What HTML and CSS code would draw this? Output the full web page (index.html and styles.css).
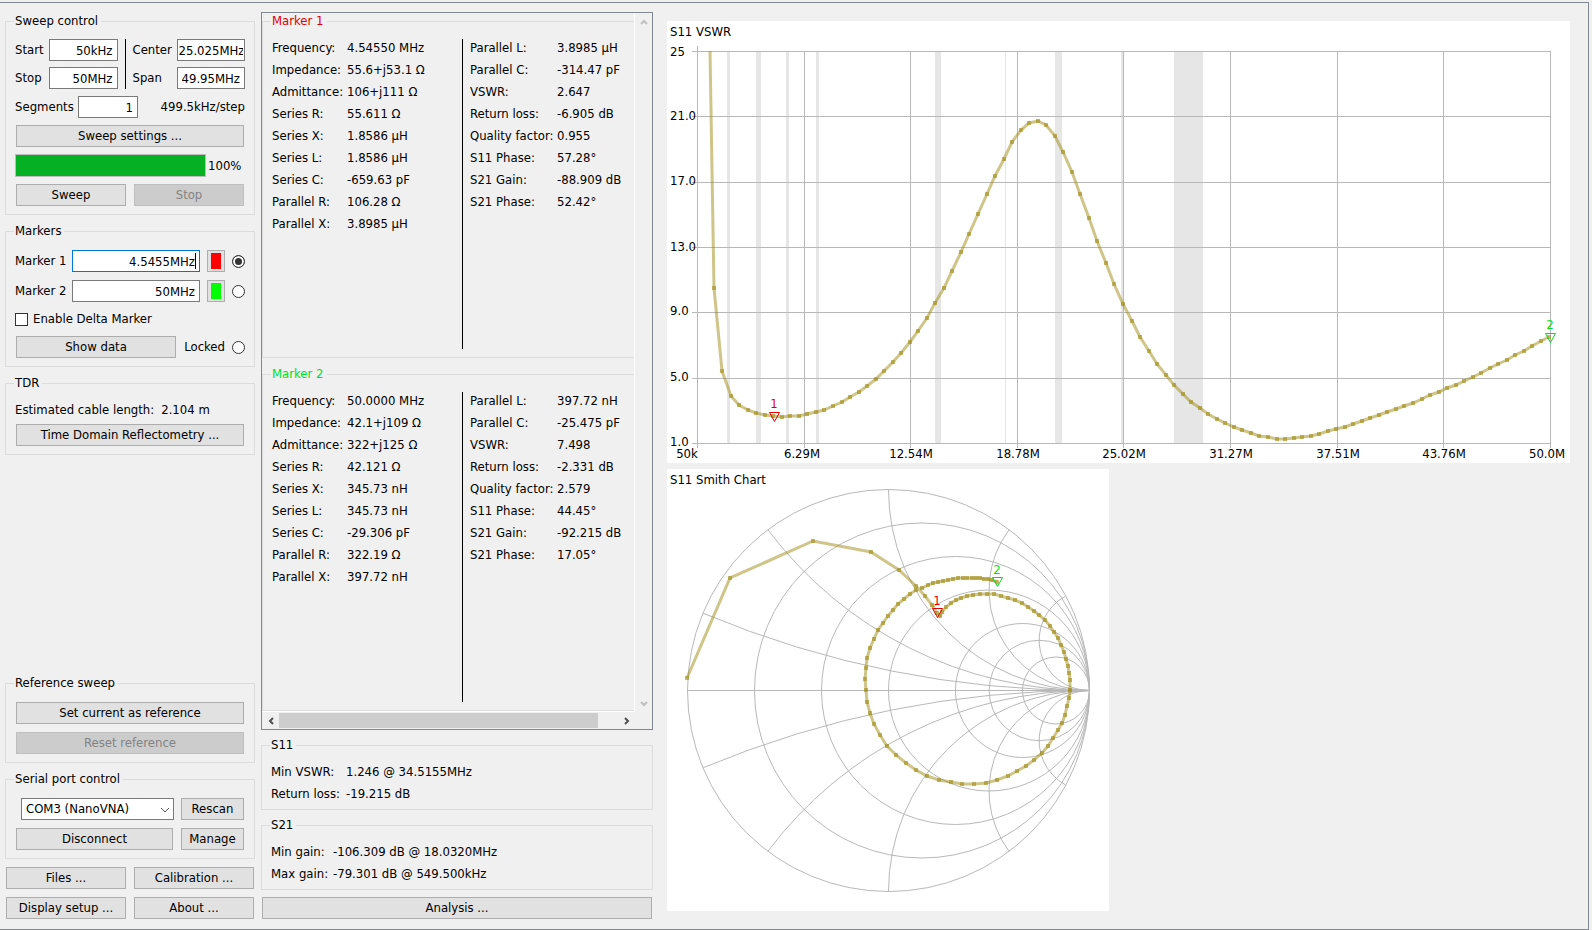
FILE: index.html
```html
<!DOCTYPE html>
<html lang="en">
<head>
    <meta charset="UTF-8">
    <meta name="viewport" content="width=device-width, initial-scale=1.0">
    <title>NanoVNA Saver</title>
    <link rel="stylesheet" href="styles.css">
</head>
<body>
    <main class="window">

        <!-- Controls -->
        <div class="controls">
            <fieldset class="group sweep">
                <legend>Sweep control</legend>
                <div class="range">
                    <label for="start">Start</label>
                    <input class="field" type="text" id="start" value="50kHz">
                    <span class="divider"></span>
                    <label for="center">Center</label>
                    <input class="field tight" type="text" id="center" value="25.025MHz">
                    <label for="stop">Stop</label>
                    <input class="field" type="text" id="stop" value="50MHz">
                    <label for="span">Span</label>
                    <input class="field" type="text" id="span" value="49.95MHz">
                </div>
                <div class="row">
                    <label class="segments-label" for="segments">Segments</label>
                    <input class="field segments" type="text" id="segments" value="1">
                    <span class="push">499.5kHz/step</span>
                </div>
                <button class="btn" type="button">Sweep settings ...</button>
                <div class="row progress-row">
                    <progress id="progress" max="100" value="100"></progress>
                    <label for="progress">100%</label>
                </div>
                <div class="pair">
                    <button class="btn" type="button">Sweep</button>
                    <button class="btn" type="button" disabled>Stop</button>
                </div>
            </fieldset>

            <fieldset class="group">
                <legend>Markers</legend>
                <div class="row">
                    <label class="marker-label" for="marker1">Marker 1</label>
                    <span class="field-wrap active"><input class="field" type="text" id="marker1" value="4.5455MHz"></span>
                    <button class="swatch" type="button" aria-label="Marker 1 color"><span class="red"></span></button>
                    <input class="radio" type="radio" name="marker" aria-label="Select marker 1" checked>
                </div>
                <div class="row">
                    <label class="marker-label" for="marker2">Marker 2</label>
                    <span class="field-wrap"><input class="field" type="text" id="marker2" value="50MHz"></span>
                    <button class="swatch" type="button" aria-label="Marker 2 color"><span class="green"></span></button>
                    <input class="radio" type="radio" name="marker" aria-label="Select marker 2">
                </div>
                <div class="row check-row">
                    <input class="check" type="checkbox" id="delta">
                    <label for="delta">Enable Delta Marker</label>
                </div>
                <div class="row">
                    <button class="btn show-data" type="button">Show data</button>
                    <label class="push" for="locked">Locked</label>
                    <input class="radio" type="radio" name="marker" id="locked">
                </div>
            </fieldset>

            <fieldset class="group tdr">
                <legend>TDR</legend>
                <div class="row">
                    <span>Estimated cable length:</span>
                    <span>2.104 m</span>
                </div>
                <button class="btn" type="button">Time Domain Reflectometry ...</button>
            </fieldset>

            <fieldset class="group reference">
                <legend>Reference sweep</legend>
                <button class="btn" type="button">Set current as reference</button>
                <button class="btn" type="button" disabled>Reset reference</button>
            </fieldset>

            <fieldset class="group">
                <legend>Serial port control</legend>
                <div class="serial">
                    <span class="select-wrap">
                        <select aria-label="Serial port">
                            <option>COM3 (NanoVNA)</option>
                        </select>
                        <svg class="arrow" viewBox="0 0 10 6"><path d="M1 1l4 4 4-4"/></svg>
                    </span>
                    <button class="btn" type="button">Rescan</button>
                    <button class="btn" type="button">Disconnect</button>
                    <button class="btn" type="button">Manage</button>
                </div>
            </fieldset>

            <div class="pair tools">
                <button class="btn" type="button">Files ...</button>
                <button class="btn" type="button">Calibration ...</button>
                <button class="btn" type="button">Display setup ...</button>
                <button class="btn" type="button">About ...</button>
            </div>
        </div>

        <!-- Marker data -->
        <div class="results">
            <div class="scroll-area">
                <div class="marker-list">
                    <fieldset class="marker-data">
                        <legend class="red-text">Marker 1</legend>
                        <table class="values left">
                            <tr><th>Frequency:</th><td>4.54550 MHz</td></tr>
                            <tr><th>Impedance:</th><td>55.6+j53.1 Ω</td></tr>
                            <tr><th>Admittance:</th><td>106+j111 Ω</td></tr>
                            <tr><th>Series R:</th><td>55.611 Ω</td></tr>
                            <tr><th>Series X:</th><td>1.8586 µH</td></tr>
                            <tr><th>Series L:</th><td>1.8586 µH</td></tr>
                            <tr><th>Series C:</th><td>-659.63 pF</td></tr>
                            <tr><th>Parallel R:</th><td>106.28 Ω</td></tr>
                            <tr><th>Parallel X:</th><td>3.8985 µH</td></tr>
                        </table>
                        <table class="values right">
                            <tr><th>Parallel L:</th><td>3.8985 µH</td></tr>
                            <tr><th>Parallel C:</th><td>-314.47 pF</td></tr>
                            <tr><th>VSWR:</th><td>2.647</td></tr>
                            <tr><th>Return loss:</th><td>-6.905 dB</td></tr>
                            <tr><th>Quality factor:</th><td>0.955</td></tr>
                            <tr><th>S11 Phase:</th><td>57.28°</td></tr>
                            <tr><th>S21 Gain:</th><td>-88.909 dB</td></tr>
                            <tr><th>S21 Phase:</th><td>52.42°</td></tr>
                        </table>
                    </fieldset>
                    <fieldset class="marker-data">
                        <legend class="green-text">Marker 2</legend>
                        <table class="values left">
                            <tr><th>Frequency:</th><td>50.0000 MHz</td></tr>
                            <tr><th>Impedance:</th><td>42.1+j109 Ω</td></tr>
                            <tr><th>Admittance:</th><td>322+j125 Ω</td></tr>
                            <tr><th>Series R:</th><td>42.121 Ω</td></tr>
                            <tr><th>Series X:</th><td>345.73 nH</td></tr>
                            <tr><th>Series L:</th><td>345.73 nH</td></tr>
                            <tr><th>Series C:</th><td>-29.306 pF</td></tr>
                            <tr><th>Parallel R:</th><td>322.19 Ω</td></tr>
                            <tr><th>Parallel X:</th><td>397.72 nH</td></tr>
                        </table>
                        <table class="values right">
                            <tr><th>Parallel L:</th><td>397.72 nH</td></tr>
                            <tr><th>Parallel C:</th><td>-25.475 pF</td></tr>
                            <tr><th>VSWR:</th><td>7.498</td></tr>
                            <tr><th>Return loss:</th><td>-2.331 dB</td></tr>
                            <tr><th>Quality factor:</th><td>2.579</td></tr>
                            <tr><th>S11 Phase:</th><td>44.45°</td></tr>
                            <tr><th>S21 Gain:</th><td>-92.215 dB</td></tr>
                            <tr><th>S21 Phase:</th><td>17.05°</td></tr>
                        </table>
                    </fieldset>
                </div>
                <div class="vbar">
                    <button type="button" aria-label="Scroll up"><svg viewBox="0 0 8 6"><path d="M1 5l3-3 3 3"/></svg></button>
                    <button type="button" aria-label="Scroll down"><svg viewBox="0 0 8 6"><path d="M1 1l3 3 3-3"/></svg></button>
                </div>
                <div class="hbar">
                    <button type="button" aria-label="Scroll left"><svg viewBox="0 0 6 8"><path d="M5 1L2 4l3 3"/></svg></button>
                    <div class="track"><div class="thumb"></div></div>
                    <button type="button" aria-label="Scroll right"><svg viewBox="0 0 6 8"><path d="M1 1l3 3-3 3"/></svg></button>
                </div>
            </div>

            <fieldset class="group summary">
                <legend>S11</legend>
                <table class="values s11">
                    <tr><th>Min VSWR:</th><td>1.246 @ 34.5155MHz</td></tr>
                    <tr><th>Return loss:</th><td>-19.215 dB</td></tr>
                </table>
            </fieldset>
            <fieldset class="group summary">
                <legend>S21</legend>
                <table class="values s21">
                    <tr><th>Min gain:</th><td>-106.309 dB @ 18.0320MHz</td></tr>
                    <tr><th>Max gain:</th><td>-79.301 dB @ 549.500kHz</td></tr>
                </table>
            </fieldset>
            <button class="btn" type="button">Analysis ...</button>
        </div>

        <!-- Charts -->
        <div class="charts">
            <div class="chart">
                <svg viewBox="0 0 903 442" preserveAspectRatio="xMinYMin meet">
                    <g class="bands">
                        <rect x="60" y="31" width="3" height="391"/>
                        <rect x="89" y="31" width="5" height="391"/>
                        <rect x="119" y="31" width="3" height="391"/>
                        <rect x="149" y="31" width="3" height="391"/>
                        <rect x="268" y="31" width="6" height="391"/>
                        <rect x="338" y="31" width="1" height="391"/>
                        <rect x="388" y="31" width="7" height="391"/>
                        <rect x="454" y="31" width="2" height="391"/>
                        <rect x="507" y="31" width="29" height="391"/>
                    </g>
                    <path class="grid crisp" d="M25 30.5H884M25 95.5H884M25 161.5H884M25 226.5H884M25 291.5H884M25 357.5H884M25 422.5H884M30.5 25V427M137.5 30V427M243.5 30V427M350.5 30V427M456.5 30V427M563.5 30V427M670.5 30V427M776.5 30V427M883.5 30V427"/>
                    <text x="3" y="15">S11 VSWR</text>
                    <g>
                        <text x="3" y="35">25</text>
                        <text x="3" y="99">21.0</text>
                        <text x="3" y="164">17.0</text>
                        <text x="3" y="230">13.0</text>
                        <text x="3" y="294">9.0</text>
                        <text x="3" y="360">5.0</text>
                        <text x="3" y="425">1.0</text>
                    </g>
                    <g class="mid">
                        <text x="20" y="437">50k</text>
                        <text x="135" y="437">6.29M</text>
                        <text x="244" y="437">12.54M</text>
                        <text x="351" y="437">18.78M</text>
                        <text x="457" y="437">25.02M</text>
                        <text x="564" y="437">31.27M</text>
                        <text x="671" y="437">37.51M</text>
                        <text x="777" y="437">43.76M</text>
                        <text x="880" y="437">50.0M</text>
                    </g>
                    <path class="trace" id="vswrTrace"/>
                    <path class="points" id="vswrPoints"/>
                    <g class="mid">
                        <path class="tip red-line" d="M102.5 391.5h10l-5 9z"/>
                        <text class="red-fill" x="107" y="387">1</text>
                        <path class="tip green-line" d="M878.5 312.5h10l-5 9z"/>
                        <text class="green-fill" x="883" y="308">2</text>
                    </g>
                </svg>
            </div>
            <div class="chart square">
                <svg viewBox="0 0 442 442" preserveAspectRatio="xMinYMin meet">
                    <g class="grid">
                        <circle cx="221.5" cy="221.5" r="201"/>
                        <circle cx="255" cy="221.5" r="167.5"/>
                        <circle cx="288.5" cy="221.5" r="134"/>
                        <circle cx="322" cy="221.5" r="100.5"/>
                        <circle cx="355.5" cy="221.5" r="67"/>
                        <circle cx="372.3" cy="221.5" r="50.2"/>
                        <circle cx="389" cy="221.5" r="33.5"/>
                        <path d="M20.5 221.5h402"/>
                        <path d="M422.5 221.5A1005 1005 0 0 1 36 144.2M422.5 221.5A402 402 0 0 1 100.9 60.7M422.5 221.5A201 201 0 0 1 221.5 20.5M422.5 221.5A100.5 100.5 0 0 1 342.1 60.7M422.5 221.5A50.2 50.2 0 0 1 398.9 126.9"/>
                        <path d="M422.5 221.5A1005 1005 0 0 0 36 298.8M422.5 221.5A402 402 0 0 0 100.9 382.3M422.5 221.5A201 201 0 0 0 221.5 422.5M422.5 221.5A100.5 100.5 0 0 0 342.1 382.3M422.5 221.5A50.2 50.2 0 0 0 398.9 316.1"/>
                    </g>
                    <text x="3" y="15">S11 Smith Chart</text>
                    <path class="trace" id="smithTrace"/>
                    <path class="points" id="smithPoints"/>
                    <g class="mid">
                        <path class="tip red-line" d="M265.5 139.5h10l-5 9z"/>
                        <text class="red-fill" x="270" y="136">1</text>
                        <path class="tip green-line" d="M325.5 108.5h10l-5 9z"/>
                        <text class="green-fill" x="330" y="105">2</text>
                    </g>
                </svg>
            </div>
        </div>
    </main>

    <script>
        // VSWR heights for sweep points 2..100
        const vswr = [
            267, 350, 375, 384, 389, 392, 394, 395, 396, 395, 395, 393, 391, 389, 385, 381, 376, 371, 365,
            358, 350, 341, 332, 321, 310, 297, 282, 267, 250, 231, 213, 193, 173, 155, 138, 121, 109, 102,
            100, 104, 115, 131, 151, 173, 197, 220, 242, 263, 283, 300, 316, 330, 343, 354, 364, 373, 381,
            387, 393, 398, 402, 406, 409, 412, 415, 416, 418, 418, 417, 416, 415, 413, 410, 408, 406, 403,
            400, 397, 394, 391, 388, 385, 382, 378, 374, 371, 367, 364, 360, 356, 352, 347, 343, 339, 334,
            330, 325, 320, 316
        ];

        const smith = [
            [20, 209], [63, 109], [146, 72], [204, 83], [232, 101], [249, 117], [258, 127], [265, 136],
            [270, 144], [273, 147], [275, 143], [279, 138], [284, 134], [289, 131], [294, 129], [300, 127],
            [306, 126], [313, 125], [320, 125], [327, 125], [334, 127], [341, 129], [348, 131], [355, 134],
            [361, 138], [367, 142], [372, 146], [378, 151], [383, 157], [387, 163], [391, 169], [394, 176],
            [397, 183], [399, 190], [401, 197], [402, 204], [403, 211], [403, 221], [402, 229], [400, 237],
            [398, 246], [395, 254], [391, 261], [386, 269], [381, 277], [375, 284], [367, 291], [359, 297],
            [350, 302], [341, 307], [330, 311], [319, 314], [307, 315], [295, 315], [284, 313], [272, 311],
            [260, 307], [249, 301], [239, 294], [229, 286], [220, 277], [213, 266], [207, 255], [203, 244],
            [200, 233], [199, 221], [198, 210], [199, 199], [200, 189], [203, 179], [207, 170], [211, 161],
            [216, 154], [221, 147], [226, 141], [231, 135], [237, 130], [243, 125], [249, 121], [255, 119],
            [261, 116], [266, 114], [271, 113], [276, 112], [281, 111], [286, 110], [291, 109], [296, 109],
            [300, 109], [305, 109], [309, 109], [313, 109], [317, 110], [321, 110], [325, 111], [330, 113]
        ];

        function draw(name, points, start) {
            const line = points.map(p => p.join(' ')).join('L');
            const dots = points.map(p => 'M' + p.join(' ') + 'h0.01').join('');
            document.getElementById(name + 'Trace').setAttribute('d', 'M' + start + line);
            document.getElementById(name + 'Points').setAttribute('d', dots);
        }

        // The first segment comes in from above the top of the scale
        draw('vswr', vswr.map((y, i) => [Math.floor(30 + 8.53 * (i + 2)), y]), '43 30L');
        draw('smith', smith, '');
    </script>
</body>
</html>
```
FILE: styles.css
```css
* {
    box-sizing: border-box;
}

body {
    margin: 0;
    padding: 2px 3px 0 0;
    min-height: 100vh;
    display: flex;
    background-color: #f0f0f0;
    color: #000;
    font-family: "DejaVu Sans Condensed", "Noto Sans", sans-serif;
    font-size: 13px;
    line-height: 16px;
}

button, input, select {
    font: inherit;
    color: inherit;
    margin: 0;
}

.window {
    flex: 1;
    display: grid;
    grid-template-columns: 250px 392px minmax(0, 1fr);
    padding: 9px 18px 10px 5px;
    border: 1px solid #828790;
    border-left: none;
}

.controls {
    display: flex;
    flex-direction: column;
    gap: 8px;
    padding-top: 1px;
}

.results {
    display: flex;
    flex-direction: column;
    gap: 7px;
    margin-left: 6px;
    margin-right: -6px;
}

/* Group boxes */
.group {
    display: flex;
    flex-direction: column;
    gap: 8px;
    min-width: 0;
    margin: 0;
    padding: 11px 9px 8px;
    border: 1px solid #dcdcdc;
}

legend {
    height: 16px;
    padding: 0 3px 0 1px;
    margin-left: -1px;
}

.sweep {
    padding-top: 10px;
    gap: 7px;
}

.tdr {
    gap: 6px;
}

.reference {
    margin-top: auto;
}

.row {
    display: flex;
    align-items: center;
    gap: 7px;
}

.push {
    margin-left: auto;
}

.range {
    display: grid;
    grid-template-columns: 34px 1fr 15px 44px 1fr;
    row-gap: 6px;
    align-items: center;
}

.divider {
    grid-column: 3;
    grid-row: 1 / 3;
    justify-self: center;
    align-self: stretch;
    width: 1px;
    background-color: #000;
}

.pair {
    display: grid;
    grid-template-columns: 1fr 1fr;
    gap: 8px 6px;
}

/* Controls */
.btn {
    height: 22px;
    margin: 0 1px;
    padding: 0;
    background-color: #e1e1e1;
    border: 1px solid #adadad;
}

.btn:disabled {
    background-color: #ccc;
    border-color: #bfbfbf;
    color: #838383;
}

.field {
    width: 100%;
    height: 22px;
    padding: 0 4px;
    border: 1px solid #7a7a7a;
    background-color: #fff;
    text-align: right;
}

.tight {
    padding: 0 1px;
}

.segments-label {
    width: 56px;
}

.segments {
    width: 60px;
}

.field-wrap {
    position: relative;
    display: flex;
    flex: 1;
}

.active .field {
    border-color: #0078d7;
}

/* text cursor */
.active::after {
    content: "";
    position: absolute;
    top: 3px;
    right: 4px;
    width: 1px;
    height: 16px;
    background-color: #000;
}

.marker-label {
    width: 57px;
    margin-right: -7px;
}

.progress-row {
    gap: 2px;
}

progress {
    appearance: none;
    flex: 0 0 191px;
    height: 23px;
    border: 1px solid #bcbcbc;
    background-color: #e6e6e6;
}

progress::-webkit-progress-bar {
    background-color: #e6e6e6;
}

progress::-webkit-progress-value {
    background-color: #06b025;
}

.swatch {
    display: flex;
    align-items: center;
    justify-content: center;
    width: 18px;
    height: 22px;
    padding: 0;
    background-color: #e1e1e1;
    border: 1px solid #adadad;
}

.swatch span {
    width: 10px;
    height: 16px;
}

.red {
    background-color: #f00;
}

.green {
    background-color: #0f0;
}

.radio, .check {
    appearance: none;
    flex: none;
    width: 13px;
    height: 13px;
    border: 1px solid #333;
    background-color: #fff;
}

.radio {
    border-radius: 50%;
}

.radio:checked {
    background-color: #333;
    box-shadow: inset 0 0 0 2px #fff;
}

.check-row {
    gap: 5px;
    height: 18px;
}

.show-data {
    flex: 0 0 160px;
}

.serial {
    display: grid;
    grid-template-columns: 1fr 65px;
    gap: 8px 6px;
}

.select-wrap {
    position: relative;
    display: flex;
    margin-left: 6px;
}

.select-wrap select {
    appearance: none;
    width: 100%;
    height: 22px;
    padding: 0 4px;
    border: 1px solid #7a7a7a;
    border-radius: 0;
    background-color: #fff;
}

.arrow {
    position: absolute;
    right: 4px;
    top: 9px;
    width: 10px;
    height: 6px;
    fill: none;
    stroke: #555;
}

/* Scroll area */
.scroll-area {
    flex: 1;
    display: grid;
    grid-template-columns: minmax(0, 1fr) 17px;
    grid-template-rows: 1fr 17px;
    border: 1px solid #828790;
}

.marker-list {
    display: flex;
    flex-direction: column;
    gap: 8px;
    border-right: 1px solid #fff;
    border-bottom: 1px solid #fff;
}

.marker-data {
    flex: 1;
    display: flex;
    align-items: stretch;
    min-width: 0;
    margin: 0;
    padding: 8px 0 8px 9px;
    border: 1px solid #dcdcdc;
    border-right: none;
}

.values {
    border-collapse: collapse;
    align-self: flex-start;
}

.values th, .values td {
    height: 22px;
    padding: 0;
    font-weight: normal;
    text-align: left;
    white-space: nowrap;
}

.left {
    width: 190px;
}

.left th {
    width: 75px;
}

.right {
    order: 2;
    flex: 1;
    margin-left: 7px;
}

.right th {
    width: 87px;
}

/* line between the two value columns */
.marker-data::after {
    content: "";
    order: 1;
    width: 1px;
    margin-top: 2px;
    background-color: #000;
}

.vbar, .hbar {
    display: flex;
    justify-content: space-between;
}

.vbar {
    flex-direction: column;
}

.vbar button, .hbar button {
    display: flex;
    align-items: center;
    justify-content: center;
    width: 17px;
    height: 17px;
    padding: 0;
    border: none;
    background: none;
}

.vbar svg {
    width: 8px;
    height: 6px;
}

.hbar svg {
    width: 6px;
    height: 8px;
}

.vbar path, .hbar path {
    fill: none;
    stroke: #bfbfbf;
    stroke-width: 2;
}

.hbar path {
    stroke: #505050;
}

.track {
    flex: 1;
    padding: 1px 0;
}

.thumb {
    width: 94%;
    height: 15px;
    background-color: #cdcdcd;
}

.summary {
    padding: 8px 9px 4px;
}

.s11 th {
    width: 75px;
}

.s21 th {
    width: 62px;
}

.red-text {
    color: #e00000;
}

.green-text {
    color: #00e020;
}

/* Charts */
.charts {
    display: flex;
    flex-direction: column;
    gap: 6px;
    margin-left: 20px;
    padding: 9px 0 8px;
}

.chart {
    flex: 1 1 0;
    min-height: 0;
    background-color: #fff;
}

.square {
    align-self: flex-start;
    aspect-ratio: 1;
}

.chart svg {
    display: block;
    width: 100%;
    height: 100%;
}

.mid {
    text-anchor: middle;
}

.bands {
    fill: #e6e6e6;
}

.grid {
    fill: none;
    stroke: #b8b8b8;
}

.crisp {
    shape-rendering: crispEdges;
}

.trace, .points {
    fill: none;
    stroke: #a08c14;
    stroke-width: 3;
    stroke-opacity: 0.5;
}

.points {
    stroke-width: 4;
    stroke-linecap: square;
    stroke-opacity: 0.6;
}

.tip {
    fill: none;
}

.red-line {
    stroke: #e00000;
}

.green-line {
    stroke: #00e020;
}

.red-fill {
    fill: #e00000;
}

.green-fill {
    fill: #00e020;
}
```
